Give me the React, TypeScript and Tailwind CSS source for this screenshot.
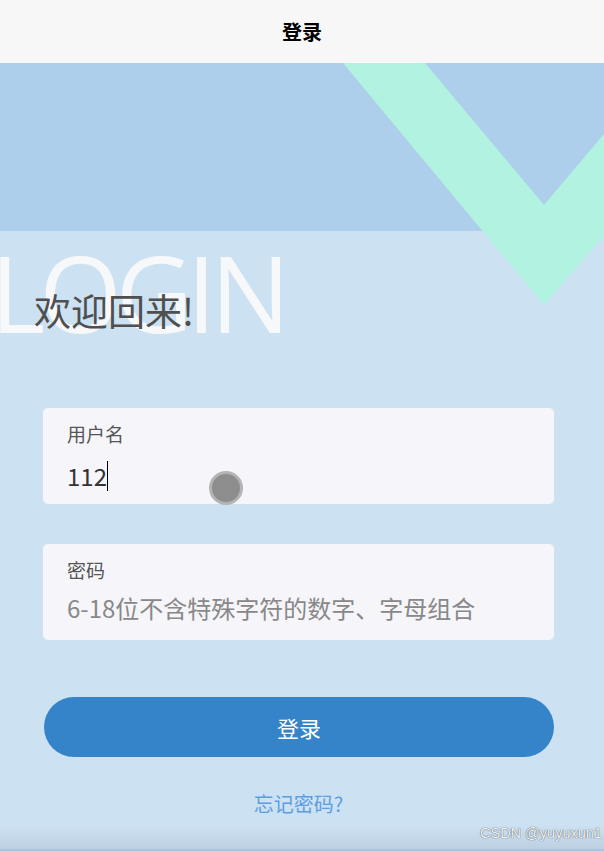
import { useState } from 'react';

export default function App() {
    const [username, setUsername] = useState('112');
    const [password, setPassword] = useState('');

    return (
        <div
            className="relative w-full h-[851px] overflow-hidden bg-[#cce1f2]"
            style={{ fontFamily: '"Noto Sans CJK SC", "Noto Sans", sans-serif' }}
        >
            {/* Header */}
            <div className="h-[63px] bg-[#f7f7f7] flex items-center justify-center">
                <h1 className="text-[20px] font-bold text-black">登录</h1>
            </div>

            {/* Top band */}
            <div className="h-[168px] bg-[#aecfec]"></div>

            {/* Mint V decoration */}
            <svg className="absolute top-0 left-0 pointer-events-none" width="604" height="851" viewBox="0 0 604 851">
                <polygon points="343,63 425,63 544,205 604,134 604,236 544,305" fill="#b1f2e0" />
            </svg>

            {/* Body */}
            <div className="relative">
                {/* Big LOGIN backdrop */}
                <div
                    className="absolute left-[-10px] top-[8px] text-[106px] leading-none font-normal text-[#f7f8fa] tracking-[-6px] select-none whitespace-nowrap"
                    style={{ fontFamily: '"Open Sans", "Noto Sans", sans-serif' }}
                >
                    LOGIN
                </div>

                <h2 className="relative ml-[34px] pt-[61px] text-[37px] leading-none text-[#4f4f4f]">欢迎回来!</h2>

                <div className="relative pl-[43px] pr-[50px] pt-[79px] flex flex-col">
                    {/* Username */}
                    <div className="h-[96px] bg-[#f6f5fa] rounded-[5px] pl-[24px] pt-[13px]">
                        <div className="text-[19px] leading-[26px] text-[#555]">用户名</div>
                        <div className="mt-[12px] flex items-center h-[34px]">
                            <input
                                value={username}
                                onChange={(e) => setUsername(e.target.value)}
                                className="w-[42px] bg-transparent outline-none text-[24px] leading-[34px] text-[#333]"
                            />
                            <span className="w-px h-[30px] bg-black -ml-[2px]"></span>
                        </div>
                    </div>

                    {/* Password */}
                    <div className="mt-[40px] h-[96px] bg-[#f6f5fa] rounded-[5px] pl-[24px] pt-[13px]">
                        <div className="text-[19px] leading-[26px] text-[#555]">密码</div>
                        <input
                            type="password"
                            value={password}
                            onChange={(e) => setPassword(e.target.value)}
                            placeholder="6-18位不含特殊字符的数字、字母组合"
                            className="mt-[8px] w-full bg-transparent outline-none text-[24px] leading-[34px] text-[#333] placeholder:text-[#888]"
                        />
                    </div>

                    <button className="mt-[57px] ml-px h-[60px] rounded-full bg-[#3584c9] text-white text-[22px]">登录</button>

                    <div className="mt-[34px] text-center text-[20px] leading-[26px] text-[#5f9de3]">忘记密码?</div>
                </div>
            </div>

            {/* Touch cursor */}
            <div className="absolute left-[209px] top-[471px] w-[34px] h-[34px] rounded-full bg-[#8d8d8d] border-[3px] border-[#b4b4b4]"></div>

            {/* Bottom shade + watermark */}
            <div className="absolute left-0 bottom-0 w-full h-[26px] bg-gradient-to-b from-[#cce1f2] to-[#bccfe2]"></div>
            <div className="absolute left-0 bottom-0 w-full h-[2px] bg-[#a9c4dd]"></div>
            <div
                className="absolute left-[480px] top-[824px] text-[14.5px] leading-[18px] text-[#eef3f8]"
                style={{ fontFamily: '"Liberation Sans", sans-serif', textShadow: '0 0 1px #666, 0 0 1px #666' }}
            >
                CSDN @yuyuxun1
            </div>
        </div>
    );
}
